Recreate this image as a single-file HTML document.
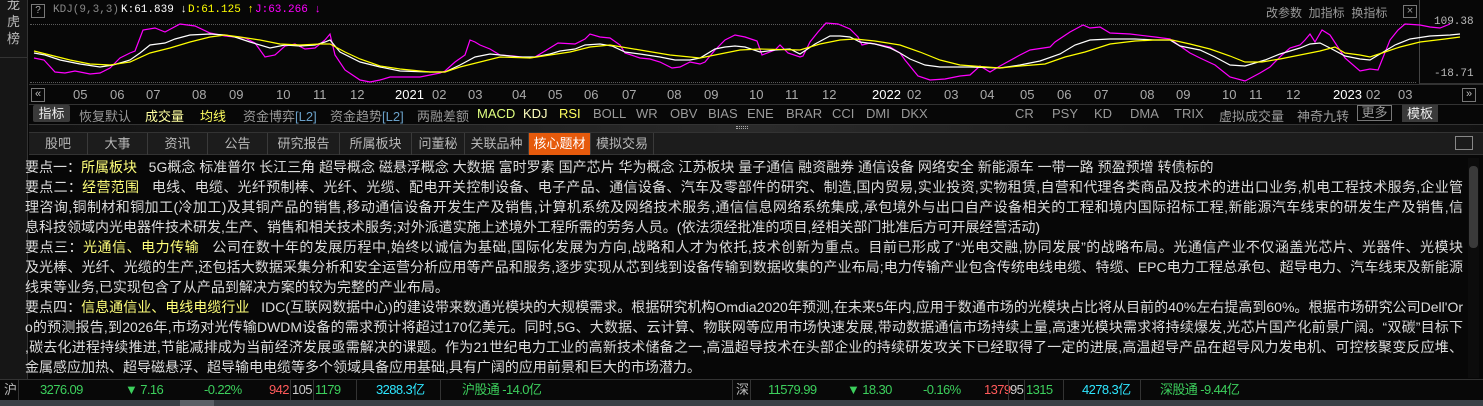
<!DOCTYPE html>
<html><head><meta charset="utf-8">
<style>
*{margin:0;padding:0;box-sizing:border-box}
body{width:1483px;height:406px;background:#070707;overflow:hidden;position:relative;font-family:"Liberation Sans","Noto Sans CJK SC",sans-serif;color:#d6d6d6}
.abs{position:absolute;white-space:nowrap}
.side{left:0;top:0;width:28px;height:379px;background:#161616;border-right:1px solid #333}
.side .t{position:absolute;left:7px;top:-4px;width:14px;font-size:13px;line-height:17px;color:#bbb;white-space:normal;word-break:break-all}
.dl{position:absolute;left:30px;width:1386px;border-top:1px dotted #5a5a5a}
.mono{font-family:"Liberation Mono","Noto Sans CJK SC",monospace}
.dates span{position:absolute;top:87px;font-size:13px;color:#aaa}
.ind span{position:absolute;top:106px;font-size:13px;color:#9a9a9a}
.tabs{position:absolute;top:132px;left:29px;height:23px;width:1454px;background:#1c1c1c;border-top:1px solid #333;border-bottom:1px solid #333}
.tabs span{position:absolute;top:0;height:22px;line-height:21px;text-align:center;font-size:13px;color:#b8b8b8;border-right:1px solid #3a3a3a}
.content{position:absolute;left:25px;top:157px;width:1440px;font-size:14px;line-height:20px;color:#dcdcdc}
.content div{white-space:nowrap;overflow:hidden;height:20px}
.content .j{text-align:justify;text-align-last:justify;width:1438px}
.y{color:#ffff7a}
.bar{position:absolute;top:379px;left:0;width:1483px;height:21px;background:#080808;border-top:1px solid #333;font-size:13px;line-height:20px}
.bar span{position:absolute;top:0}
.n{letter-spacing:-0.6px}
.g{color:#3ccf5c}.r{color:#ff5a5a}.c{color:#2ee6ff}
.sep{position:absolute;top:0;width:1px;height:21px;background:#333}
</style></head><body>
<div class="abs side"><div class="t">龙虎榜</div><div style="position:absolute;left:0;top:57px;width:28px;border-top:1px solid #333"></div></div>
<div class="abs" style="left:31px;top:4px;width:14px;height:14px;border:1px solid #777;color:#aaa;font-size:10px;line-height:12px;text-align:center">?</div>
<div class="abs mono" style="left:53px;top:4px;font-size:11px;color:#888">KDJ(9,3,3)</div>
<div class="abs mono" style="left:121px;top:4px;font-size:11px;color:#fff">K:61.839 <span>↓</span></div>
<div class="abs mono" style="left:188px;top:4px;font-size:11px;color:#ff0">D:61.125 ↑</div>
<div class="abs mono" style="left:255px;top:4px;font-size:11px;color:#f0f">J:63.266 ↓</div>
<div class="abs" style="left:1266px;top:4px;font-size:12px;color:#999">改参数&nbsp;&nbsp;加指标&nbsp;&nbsp;换指标</div>
<div class="abs" style="left:1403px;top:5px;width:14px;height:13px;border:1px solid #777;color:#999;font-size:11px;line-height:11px;text-align:center">×</div>
<div class="dl" style="top:24px"></div><div class="dl" style="top:82px"></div>
<div class="abs" style="left:1419px;top:0;width:64px;height:84px;border-left:1px solid #444;border-bottom:1px solid #333"></div>
<div class="abs mono" style="left:1434px;top:16px;font-size:11px;color:#bbb">109.38</div>
<div class="abs mono" style="left:1434px;top:68px;font-size:11px;color:#bbb">-18.71</div>
<svg class="abs" style="left:0;top:0" width="1483" height="90" fill="none" stroke-width="1.2">
<polyline stroke="#f0f" points="34,58 44,60 55,72 65,73 75,71 90,74 100,73 110,68 120,58 130,53 135,51 143,30 155,28 165,32 180,24 195,26 210,33 225,36 245,38 255,43 265,57 275,55 285,46 295,44 305,49 315,48 325,40 330,34 335,55 345,70 360,80 370,82 380,80 390,77 420,77 440,73 445,71 455,62 465,55 470,40 475,42 480,45 490,49 500,55 513,56 530,58 535,57 545,51 558,43 575,44 585,39 590,34 600,37 610,38 620,45 625,53 640,58 650,59 660,62 672,68 680,67 690,62 700,64 705,62 715,50 725,40 735,35 745,37 757,41 762,55 775,50 780,45 788,53 800,57 803,56 810,42 818,32 826,23 838,24 850,29 858,37 862,45 870,43 880,45 890,47 900,53 905,60 918,76 930,80 945,79 960,76 970,75 980,66 990,72 1000,66 1020,55 1030,50 1050,47 1055,42 1070,32 1083,25 1090,28 1100,27 1110,33 1130,34 1155,37 1170,39 1190,53 1200,58 1215,65 1230,77 1245,81 1260,73 1270,67 1282,55 1290,48 1300,45 1305,40 1310,34 1315,42 1322,30 1330,35 1345,58 1360,71 1370,69 1378,70 1390,40 1398,30 1405,24 1420,25 1430,27 1440,28 1450,24"/>
<polyline stroke="#fff" points="34,53 45,55 60,60 80,64 100,67 113,65 120,63 130,60 140,53 150,45 165,43 175,39 190,35 210,34 225,35 235,37 250,42 270,48 285,45 300,46 315,45 325,42 330,40 340,52 360,62 380,67 400,71 430,72 445,72 460,65 475,57 490,54 520,57 535,57 550,54 560,51 575,49 585,45 600,44 612,46 625,52 640,54 660,57 675,60 690,60 700,58 715,49 725,47 735,46 745,47 760,52 775,50 790,49 800,54 815,44 830,36 840,36 850,37 860,42 875,44 890,48 900,53 910,59 925,65 940,67 970,67 1000,68 1020,65 1040,61 1060,54 1075,45 1090,40 1110,39 1135,39 1155,40 1170,40 1180,46 1200,50 1215,57 1230,65 1245,66 1265,60 1280,54 1300,48 1310,44 1320,43 1330,48 1345,56 1360,59 1370,60 1380,54 1395,45 1410,39 1430,36 1450,35 1460,34"/>
<polyline stroke="#ff0" points="34,51 50,55 70,60 90,64 110,65 130,62 150,53 170,48 190,42 210,37 225,35 240,37 260,40 280,44 300,45 320,44 330,44 345,52 360,59 380,66 400,69 430,72 445,72 460,67 480,62 500,57 530,58 550,55 570,52 590,47 610,45 640,50 670,55 700,58 720,54 740,50 760,49 800,50 820,44 840,40 855,39 875,41 900,45 920,52 940,60 960,65 1000,68 1020,66 1045,64 1065,57 1085,52 1110,44 1135,41 1155,40 1172,40 1190,44 1210,49 1230,56 1245,62 1262,62 1280,59 1300,55 1320,51 1335,47 1345,53 1360,55 1370,57 1385,52 1400,47 1420,42 1445,39 1460,37"/>
</svg>
<div class="abs" style="left:29px;top:84px;width:1454px;border-top:1px solid #333"></div>
<div class="abs" style="left:31px;top:88px;width:14px;height:14px;border:1px solid #777;color:#bbb;font-size:11px;line-height:11px;text-align:center">«</div>
<div class="abs" style="left:1462px;top:88px;width:14px;height:14px;border:1px solid #777;color:#bbb;font-size:11px;line-height:11px;text-align:center">»</div>
<div class="dates">
<span style="left:73px">05</span><span style="left:110px">06</span><span style="left:146px">07</span><span style="left:192px">08</span><span style="left:229px">09</span><span style="left:276px">10</span><span style="left:313px">11</span><span style="left:350px">12</span><span style="left:395px;color:#fff">2021</span><span style="left:432px">02</span><span style="left:468px">03</span>
<span style="left:512px">04</span><span style="left:548px">05</span><span style="left:584px">06</span><span style="left:622px">07</span><span style="left:667px">08</span><span style="left:704px">09</span><span style="left:749px">10</span><span style="left:785px">11</span><span style="left:822px">12</span><span style="left:872px;color:#fff">2022</span><span style="left:907px">02</span><span style="left:944px">03</span>
<span style="left:980px">04</span><span style="left:1020px">05</span><span style="left:1057px">06</span><span style="left:1094px">07</span><span style="left:1140px">08</span><span style="left:1176px">09</span><span style="left:1222px">10</span><span style="left:1249px">11</span><span style="left:1286px">12</span><span style="left:1333px;color:#fff">2023</span><span style="left:1366px">02</span><span style="left:1398px">03</span>
</div>
<div class="abs" style="left:29px;top:104px;width:1454px;border-top:1px solid #333"></div>
<div class="ind">
<span style="left:33px;top:105px;width:37px;height:17px;background:#3a3a3a;color:#eee;text-align:center;line-height:17px;border-radius:2px">指标</span>
<span style="left:79px">恢复默认</span><span style="left:145px;color:#ffffa0">成交量</span><span style="left:200px;color:#ffff60">均线</span><span style="left:243px">资金博弈<span style="position:static;color:#6aa0c8">[L2]</span></span><span style="left:330px">资金趋势<span style="position:static;color:#6aa0c8">[L2]</span></span><span style="left:417px">两融差额</span>
<span style="left:477px;color:#e0ff80">MACD</span><span style="left:523px;color:#ffffc0">KDJ</span><span style="left:559px;color:#ffff60">RSI</span><span style="left:593px">BOLL</span><span style="left:636px">WR</span><span style="left:670px">OBV</span><span style="left:708px">BIAS</span><span style="left:747px">ENE</span><span style="left:786px">BRAR</span><span style="left:832px">CCI</span><span style="left:866px">DMI</span><span style="left:901px">DKX</span><span style="left:1015px">CR</span><span style="left:1052px">PSY</span><span style="left:1094px">KD</span><span style="left:1130px">DMA</span><span style="left:1174px">TRIX</span><span style="left:1219px">虚拟成交量</span><span style="left:1297px">神奇九转</span>
<span style="left:1357px;top:105px;width:35px;height:16px;border:1px solid #777;line-height:14px;text-align:center">更多</span>
<span style="left:1402px;top:105px;width:36px;height:17px;background:#3a3a3a;color:#eee;line-height:17px;text-align:center">模板</span>
</div>
<div class="abs" style="left:29px;top:124px;width:1454px;height:8px;background:linear-gradient(90deg,#111,#2a2a2a 50%,#111);border-top:1px solid #333"></div>
<div class="abs" style="left:736px;top:126px;width:12px;height:3px;border-top:1px dotted #aaa;border-bottom:1px dotted #aaa"></div>
<div class="tabs">
<span style="left:0;width:59px">股吧</span><span style="left:59px;width:60px">大事</span><span style="left:119px;width:60px">资讯</span><span style="left:179px;width:60px">公告</span><span style="left:239px;width:72px">研究报告</span><span style="left:311px;width:72px">所属板块</span><span style="left:383px;width:53px">问董秘</span><span style="left:436px;width:64px">关联品种</span><span style="left:500px;width:62px;background:#e65a0c;color:#fff">核心题材</span><span style="left:562px;width:63px">模拟交易</span>
<span style="left:1426px;top:3px;width:18px;height:14px;border:1px solid #888"></span>
</div>
<div class="content">
<div>要点一：<span class="y">所属板块</span>&nbsp;&nbsp;&nbsp;5G概念 标准普尔 长江三角 超导概念 磁悬浮概念 大数据 富时罗素 国产芯片 华为概念 江苏板块 量子通信 融资融券 通信设备 网络安全 新能源车 一带一路 预盈预增 转债标的</div>
<div class="j">要点二：<span class="y">经营范围</span>&nbsp;&nbsp;&nbsp;电线、电缆、光纤预制棒、光纤、光缆、配电开关控制设备、电子产品、通信设备、汽车及零部件的研究、制造,国内贸易,实业投资,实物租赁,自营和代理各类商品及技术的进出口业务,机电工程技术服务,企业管</div>
<div class="j">理咨询,铜制材和铜加工(冷加工)及其铜产品的销售,移动通信设备开发生产及销售,计算机系统及网络技术服务,通信信息网络系统集成,承包境外与出口自产设备相关的工程和境内国际招标工程,新能源汽车线束的研发生产及销售,信</div>
<div>息科技领域内光电器件技术研发,生产、销售和相关技术服务;对外派遣实施上述境外工程所需的劳务人员。(依法须经批准的项目,经相关部门批准后方可开展经营活动)</div>
<div class="j">要点三：<span class="y">光通信、电力传输</span>&nbsp;&nbsp;&nbsp;公司在数十年的发展历程中,始终以诚信为基础,国际化发展为方向,战略和人才为依托,技术创新为重点。目前已形成了“光电交融,协同发展”的战略布局。光通信产业不仅涵盖光芯片、光器件、光模块</div>
<div class="j">及光棒、光纤、光缆的生产,还包括大数据采集分析和安全运营分析应用等产品和服务,逐步实现从芯到线到设备传输到数据收集的产业布局;电力传输产业包含传统电线电缆、特缆、EPC电力工程总承包、超导电力、汽车线束及新能源</div>
<div>线束等业务,已实现包含了从产品到解决方案的较为完整的产业布局。</div>
<div class="j">要点四：<span class="y">信息通信业、电线电缆行业</span>&nbsp;&nbsp;&nbsp;IDC(互联网数据中心)的建设带来数通光模块的大规模需求。根据研究机构Omdia2020年预测,在未来5年内,应用于数通市场的光模块占比将从目前的40%左右提高到60%。根据市场研究公司Dell'Or</div>
<div class="j">o的预测报告,到2026年,市场对光传输DWDM设备的需求预计将超过170亿美元。同时,5G、大数据、云计算、物联网等应用市场快速发展,带动数据通信市场持续上量,高速光模块需求将持续爆发,光芯片国产化前景广阔。“双碳”目标下</div>
<div class="j">,碳去化进程持续推进,节能减排成为当前经济发展亟需解决的课题。作为21世纪电力工业的高新技术储备之一,高温超导技术在头部企业的持续研发攻关下已经取得了一定的进展,高温超导产品在超导风力发电机、可控核聚变反应堆、</div>
<div>金属感应加热、超导磁悬浮、超导输电电缆等多个领域具备应用基础,具有广阔的应用前景和巨大的市场潜力。</div>
</div>
<div class="abs" style="left:1468px;top:158px;width:11px;height:220px;background:#0c0c0c"></div>
<div class="abs" style="left:1469px;top:166px;width:9px;height:82px;background:#3a3a3a;border-radius:4px"></div>
<div class="bar">
<span style="left:4px;color:#bbb">沪</span><div class="sep" style="left:18px"></div>
<span class="g n" style="left:40px">3276.09</span><span class="g n" style="left:125px">▼ 7.16</span><span class="g n" style="left:204px">-0.22%</span>
<span class="r n" style="left:269px">942</span><div class="sep" style="left:290px"></div><span class="n" style="left:292px;color:#ccc">105</span><div class="sep" style="left:313px"></div><span class="g n" style="left:315px">1179</span>
<div class="sep" style="left:356px"></div><span class="c n" style="left:376px">3288.3亿</span><div class="sep" style="left:440px"></div><span class="g n" style="left:462px">沪股通 -14.0亿</span>
<div class="sep" style="left:732px"></div><span style="left:736px;color:#bbb">深</span><div class="sep" style="left:750px"></div>
<span class="g n" style="left:768px">11579.99</span><span class="g n" style="left:847px">▼ 18.30</span><span class="g n" style="left:923px">-0.16%</span>
<span class="r n" style="left:984px">1379</span><div class="sep" style="left:1008px"></div><span class="n" style="left:1010px;color:#ccc">95</span><div class="sep" style="left:1024px"></div><span class="g n" style="left:1026px">1315</span>
<div class="sep" style="left:1063px"></div><span class="c n" style="left:1082px">4278.3亿</span><div class="sep" style="left:1140px"></div><span class="g n" style="left:1160px">深股通 -9.44亿</span>
</div>
<div class="abs" style="left:0;top:400px;width:1483px;height:6px;background:#3a4046"></div>
<div class="abs" style="left:180px;top:400px;width:34px;height:6px;background:#5a6066"></div>
</body></html>
